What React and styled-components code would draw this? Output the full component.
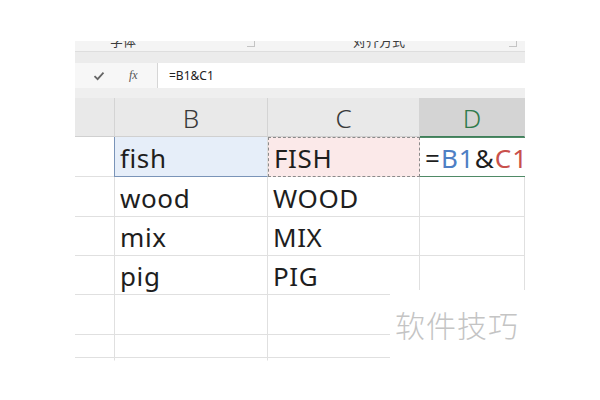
import styled, { createGlobalStyle } from 'styled-components';

const Global = createGlobalStyle`
	html, body {
		margin: 0;
		padding: 0;
		background: #ffffff;
	}
	body {
		width: 600px;
		height: 400px;
		overflow: hidden;
		font-family: "Noto Sans", "Noto Sans CJK SC", sans-serif;
	}
`;

const Frame = styled.div`
	position: relative;
	width: 450px;
	margin: 41px 0 0 75px;
	overflow: hidden;
`;

const Ribbon = styled.div`
	position: relative;
	height: 10px;
	background: #f4f4f4;
	overflow: hidden;
	border-bottom: 1px solid #dedede;
`;

const GroupLabel = styled.span`
	position: absolute;
	top: -9px;
	left: ${(p) => p.$left}px;
	font-family: "Noto Sans CJK SC", sans-serif;
	font-size: 13px;
	line-height: 18px;
	color: #3c3c3c;
`;

const Launcher = styled.span`
	position: absolute;
	top: -2px;
	left: ${(p) => p.$left}px;
	width: 7px;
	height: 7px;
	border-right: 1px solid #c4c4c4;
	border-bottom: 1px solid #c4c4c4;
`;

const Band = styled.div`
	height: ${(p) => p.$h}px;
	background: ${(p) => p.$bg};
`;

const FormulaBar = styled.div`
	display: flex;
	align-items: stretch;
	height: 25px;
	background: #f7f7f7;
`;

const FormulaTools = styled.div`
	display: flex;
	align-items: center;
	width: 82px;
	padding-left: 18px;
	box-sizing: border-box;
	gap: 24px;
`;

const Fx = styled.span`
	font-family: "Liberation Serif", serif;
	font-style: italic;
	font-size: 12px;
	color: #555;
`;

const FormulaInput = styled.div`
	flex: 1;
	display: flex;
	align-items: center;
	padding-left: 11px;
	background: #ffffff;
	border-left: 1px solid #d6d6d6;
	font-size: 12px;
	color: #222;
`;

const Sheet = styled.div`
	display: grid;
	grid-template-columns: 40px 153px 152px 105px;
	grid-template-rows: 39px 40px 40px 39px 39px 40px 23px;
`;

const HeadCell = styled.div`
	display: flex;
	align-items: center;
	justify-content: center;
	box-sizing: border-box;
	background: ${(p) => (p.$active ? '#d4d4d4' : '#e9e9e9')};
	border-right: 1px solid #d4d4d4;
	border-bottom: 1px solid ${(p) => (p.$active ? '#3f7f5a' : '#d0d0d0')};
	color: ${(p) => (p.$active ? '#2e7a4c' : '#3a3a3a')};
	font-size: 26px;
	font-weight: 300;
	padding-top: 2px;
`;

const Cell = styled.div`
	display: flex;
	align-items: center;
	box-sizing: border-box;
	padding: 2px 0 0 5px;
	white-space: nowrap;
	overflow: hidden;
	font-size: 26px;
	letter-spacing: 0.6px;
	color: #1e1e1e;
	border-right: 1px solid #e0e0e0;
	border-bottom: 1px solid ${(p) => (p.$last ? 'transparent' : '#e0e0e0')};
	background: ${(p) => p.$bg || '#ffffff'};

	${(p) =>
		p.$kind === 'ref' &&
		`
		border-left: 1px solid #7a94b8;
		border-bottom: 1px solid #7a94b8;
		margin-left: -1px;
	`}
	${(p) =>
		p.$kind === 'copy' &&
		`
		border: 1px dashed #8a8a8a;
	`}
	${(p) =>
		p.$kind === 'active' &&
		`
		border-top: 1px solid #4f8a66;
		border-bottom: 1px solid #4f8a66;
		border-right: none;
		padding-left: 5px;
		letter-spacing: 1px;
	`}
`;

const RefB = styled.span`
	color: #4e7fc4;
`;

const RefC = styled.span`
	color: #c9504b;
`;

const Watermark = styled.div`
	position: absolute;
	left: 315px;
	top: 249px;
	width: 140px;
	height: 80px;
	background: #ffffff;
	padding: 12px 0 0 5px;
	box-sizing: border-box;
	font-family: "Noto Sans CJK SC", sans-serif;
	font-size: 30px;
	font-weight: 300;
	letter-spacing: 1px;
	color: #c4c4c4;
`;

const Check = () => (
	<svg width="12" height="10" viewBox="0 0 12 10">
		<path d="M1.5 5.2 L4.6 8.2 L10.5 1.6" fill="none" stroke="#666" strokeWidth="1.8" />
	</svg>
);

const rows = [
	['wood', 'WOOD'],
	['mix', 'MIX'],
	['pig', 'PIG'],
	['', ''],
	['', ''],
	['', ''],
];

const App = () => {
	return (
		<>
			<Global />
			<Frame>
				<Ribbon>
					<GroupLabel $left={35}>字体</GroupLabel>
					<Launcher $left={172} />
					<GroupLabel $left={278}>对齐方式</GroupLabel>
					<Launcher $left={434} />
				</Ribbon>
				<Band $h={11} $bg="#ececec" />
				<FormulaBar>
					<FormulaTools>
						<Check />
						<Fx>fx</Fx>
					</FormulaTools>
					<FormulaInput>=B1&amp;C1</FormulaInput>
				</FormulaBar>
				<Band $h={10} $bg="#efefef" />
				<Sheet>
					<HeadCell />
					<HeadCell>B</HeadCell>
					<HeadCell>C</HeadCell>
					<HeadCell $active>D</HeadCell>

					<Cell />
					<Cell $kind="ref" $bg="#e6eef9">fish</Cell>
					<Cell $kind="copy" $bg="#fbe9e9">FISH</Cell>
					<Cell $kind="active">
						=<RefB>B1</RefB>&amp;<RefC>C1</RefC>
					</Cell>

					{rows.map(([b, c], i) => {
						const last = i === rows.length - 1;
						return [
							<Cell key={`a${i}`} $last={last} />,
							<Cell key={`b${i}`} $last={last}>{b}</Cell>,
							<Cell key={`c${i}`} $last={last}>{c}</Cell>,
							<Cell key={`d${i}`} $last={last} />,
						];
					})}
				</Sheet>
				<Watermark>软件技巧</Watermark>
			</Frame>
		</>
	);
};

export default App;
